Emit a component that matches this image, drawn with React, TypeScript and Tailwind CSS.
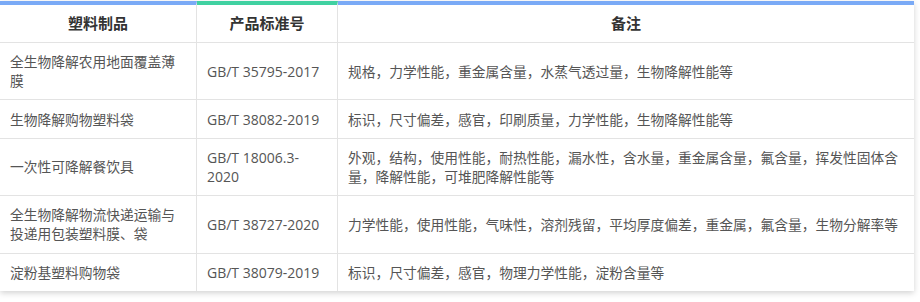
import React from 'react';

interface StandardRow {
  product: string;
  code: string;
  remark: string;
}

const rows: StandardRow[] = [
  {
    product: '全生物降解农用地面覆盖薄膜',
    code: 'GB/T 35795-2017',
    remark: '规格，力学性能，重金属含量，水蒸气透过量，生物降解性能等',
  },
  {
    product: '生物降解购物塑料袋',
    code: 'GB/T 38082-2019',
    remark: '标识，尺寸偏差，感官，印刷质量，力学性能，生物降解性能等',
  },
  {
    product: '一次性可降解餐饮具',
    code: 'GB/T 18006.3-2020',
    remark: '外观，结构，使用性能，耐热性能，漏水性，含水量，重金属含量，氟含量，挥发性固体含量，降解性能，可堆肥降解性能等',
  },
  {
    product: '全生物降解物流快递运输与投递用包装塑料膜、袋',
    code: 'GB/T 38727-2020',
    remark: '力学性能，使用性能，气味性，溶剂残留，平均厚度偏差，重金属，氟含量，生物分解率等',
  },
  {
    product: '淀粉基塑料购物袋',
    code: 'GB/T 38079-2019',
    remark: '标识，尺寸偏差，感官，物理力学性能，淀粉含量等',
  },
];

const App: React.FC = () => {
  return (
    <div
      className="min-h-screen bg-white pt-px"
      style={{ fontFamily: '"Open Sans", "Noto Sans CJK SC", sans-serif' }}
    >
      <table className="w-[914px] table-fixed border-separate border-spacing-0 bg-white shadow-[0_2px_6px_rgba(0,0,0,0.18)]">
        <colgroup>
          <col className="w-[197px]" />
          <col className="w-[141px]" />
          <col />
        </colgroup>
        <thead>
          <tr>
            <th className="border-t-4 border-t-[#7aaaf6] border-r border-b border-[#e3e3e3] py-[9px] text-center text-[15px] leading-[19px] font-bold text-[#333]">
              塑料制品
            </th>
            <th className="border-t-4 border-t-[#40d1a1] border-r border-b border-[#e3e3e3] py-[9px] text-center text-[15px] leading-[19px] font-bold text-[#333]">
              产品标准号
            </th>
            <th className="border-t-4 border-t-[#7aaaf6] border-b border-[#e3e3e3] py-[9px] text-center text-[15px] leading-[19px] font-bold text-[#333]">
              备注
            </th>
          </tr>
        </thead>
        <tbody>
          {rows.map((row, i) => {
            const last = i === rows.length - 1;
            return (
              <tr key={row.code}>
                <td
                  className={`border-r border-[#e3e3e3] pl-[10px] pr-[9px] py-[9.2px] text-left align-middle text-[13.75px] leading-[19px] text-[#555] ${last ? '' : 'border-b'}`}
                >
                  {row.product}
                </td>
                <td
                  className={`border-r border-[#e3e3e3] px-[10px] py-[9.2px] text-left align-middle text-[14px] leading-[19px] text-[#555] ${last ? '' : 'border-b'}`}
                >
                  {row.code}
                </td>
                <td
                  className={`border-[#e3e3e3] pl-[10px] pr-[10px] py-[9.2px] text-left align-middle text-[13.75px] leading-[19px] text-[#555] ${last ? '' : 'border-b'}`}
                >
                  {row.remark}
                </td>
              </tr>
            );
          })}
        </tbody>
      </table>
    </div>
  );
};

export default App;
